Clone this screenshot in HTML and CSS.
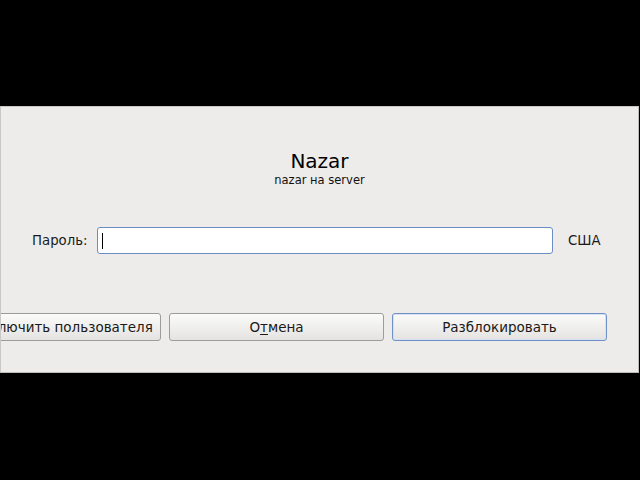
FILE: index.html
```html
<!DOCTYPE html>
<html>
<head>
<meta charset="utf-8">
<link rel="stylesheet" href="styles.css">
</head>
<body>
<div class="dialog">
  <div class="title">Nazar</div>
  <div class="subtitle">nazar на server</div>
  <div class="pwrow">
    <span class="label">Пароль:</span>
    <div class="entry"><span class="caret"></span></div>
    <span class="layout">США</span>
  </div>
  <div class="buttons">
    <button class="btn">Переключить пользователя</button>
    <button class="btn">О<u>т</u>мена</button>
    <button class="btn btn-default">Разблокировать</button>
  </div>
</div>
</body>
</html>
```
FILE: styles.css
```css
html, body {
  margin: 0;
  padding: 0;
  background: #000;
}
body {
  padding-top: 106px;
  font-family: "DejaVu Sans", sans-serif;
  color: #1a1a1a;
}
.dialog {
  width: 637px;
  height: 223px;
  background: #edeceb;
  border: 1px solid #bdbcba;
  border-top-color: #c9c8c6;
  border-left-color: #c9c8c6;
  overflow: hidden;
  display: flex;
  flex-direction: column;
  padding-top: 42px;
  box-sizing: content-box;
}
.title {
  text-align: center;
  font-size: 20px;
  line-height: 24px;
  color: #000;
}
.subtitle {
  text-align: center;
  font-size: 11.5px;
  line-height: 13px;
  margin-top: 1px;
  color: #111;
}
.pwrow {
  display: flex;
  align-items: center;
  margin-top: 40px;
  padding-left: 31px;
  padding-right: 38px;
  font-size: 13.3px;
}
.label {
  width: 65px;
  flex-shrink: 0;
}
.entry {
  flex: 1;
  height: 25px;
  background: #fff;
  border: 1px solid #6a8ec4;
  border-radius: 3px;
  display: flex;
  align-items: center;
  padding-left: 4px;
}
.caret {
  width: 1px;
  height: 16px;
  background: #000;
}
.layout {
  margin-left: 15px;
  width: 32px;
  flex-shrink: 0;
}
.buttons {
  display: flex;
  justify-content: flex-end;
  gap: 8px;
  margin-top: 59px;
  padding-right: 31px;
}
.btn {
  flex-shrink: 0;
  width: 215px;
  height: 28px;
  font-family: "DejaVu Sans", sans-serif;
  font-size: 13.5px;
  color: #1a1a1a;
  background: linear-gradient(#fbfbfa, #e4e3e1);
  border: 1px solid #9d9c9a;
  border-radius: 3px;
  padding: 0;
  white-space: nowrap;
}
.btn u {
  text-decoration: underline;
  text-underline-offset: 2px;
}
.btn-default {
  border-color: #6f91c8;
  box-shadow: inset 0 0 0 1px #d6e2f3;
}
```
